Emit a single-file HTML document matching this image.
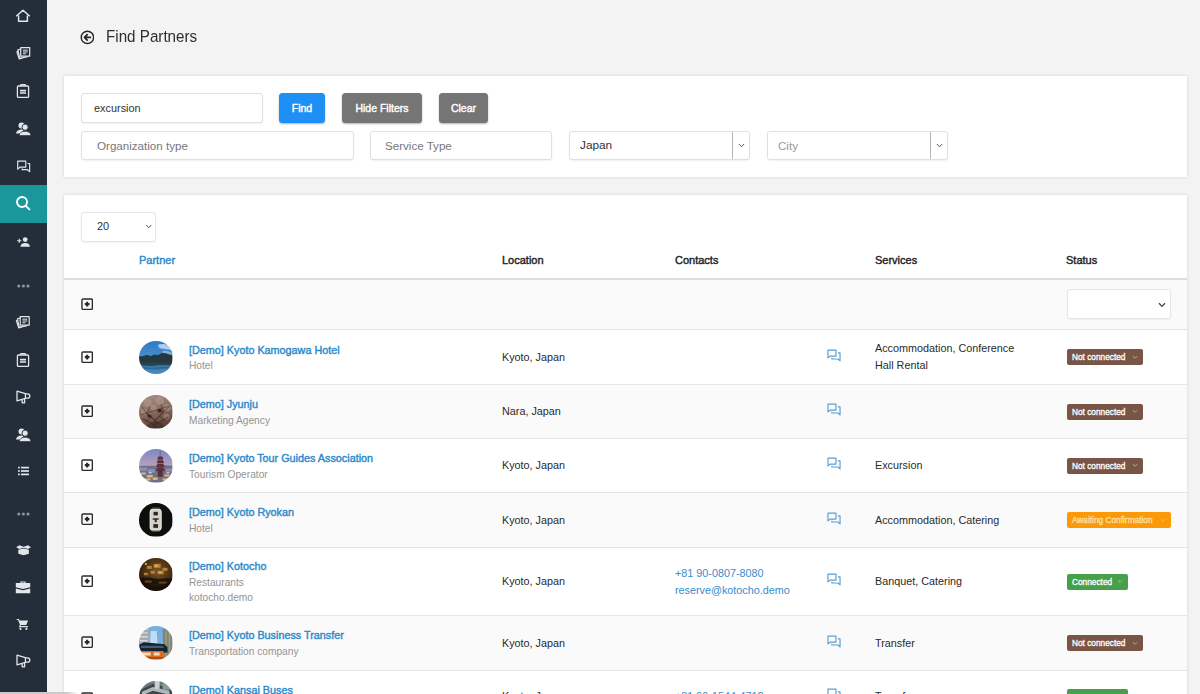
<!DOCTYPE html>
<html>
<head>
<meta charset="utf-8">
<title>Find Partners</title>
<style>
*{box-sizing:border-box;margin:0;padding:0}
html,body{width:1200px;height:694px;overflow:hidden;background:#f3f3f3;font-family:"Liberation Sans",sans-serif;color:#222}
.abs{position:absolute}
#side{position:absolute;left:0;top:0;width:46.5px;height:694px;background:#232e3a}
#side .act{position:absolute;left:0;top:184.6px;width:46.5px;height:38.3px;background:#1a979b}
#side svg{position:absolute;left:14px;width:18px;height:18px}
.card{position:absolute;left:64px;width:1123px;background:#fff;box-shadow:0 0 3px rgba(0,0,0,.14)}
.inp{position:absolute;height:29.5px;border:1px solid #e0e0e0;border-radius:3px;background:#fff;font-size:11.6px;line-height:27px;color:#333;box-shadow:0 1px 2px rgba(0,0,0,.06)}
.ph{color:#777}
.btn{position:absolute;top:17px;height:30px;border-radius:3.5px;color:#fff;font-size:10.5px;-webkit-text-stroke:.4px currentColor;text-align:center;line-height:30px;box-shadow:0 1px 2px rgba(0,0,0,.3)}
.th{position:absolute;top:58px;font-size:11px;-webkit-text-stroke:.4px currentColor;color:#222;line-height:14px}
.row{position:absolute;left:0;width:1123px;border-top:1px solid #e6e6e6}
.row.g{background:#fafafa}
.plus{position:absolute;left:16.7px;width:12.3px;height:12.3px;margin-top:.35px}
.av{position:absolute;left:75.3px;width:33.4px;height:33.4px;border-radius:50%;overflow:hidden}
.nm{position:absolute;left:125px;font-size:10.8px;-webkit-text-stroke:.4px currentColor;color:#2b8acb;line-height:14px;white-space:nowrap}
.sub{position:absolute;left:125px;font-size:10.2px;color:#949494;line-height:13px;white-space:nowrap}
.tx{position:absolute;font-size:10.8px;color:#2a2a2a;line-height:16px;white-space:nowrap}
.lnk{color:#378dcb}
.chat{position:absolute;left:763px;width:14px;height:13px}
.bdg{position:absolute;left:1002.7px;height:16px;border-radius:2px;color:#fff;font-size:8.3px;-webkit-text-stroke:.3px currentColor;line-height:16.5px;padding-left:5.3px;white-space:nowrap}
.bdg svg{position:absolute;right:5px;top:5.5px;width:6px;height:5px}
.br{background:#795548;width:76px}
.or{background:#fc9908;width:104px;color:#ffe0a0}
.gr{background:#45a049;width:61.2px}
</style>
</head>
<body>
<!--DEFS-->
<svg width="0" height="0" style="position:absolute">
<defs>
<filter id="bl" x="-10%" y="-10%" width="120%" height="120%"><feGaussianBlur stdDeviation=".55"/></filter>
<linearGradient id="g1s" x1="0" y1="0" x2="0" y2="1"><stop offset="0" stop-color="#2a78c2"/><stop offset="1" stop-color="#63a6dc"/></linearGradient>
<linearGradient id="g1w" x1="0" y1="0" x2="0" y2="1"><stop offset="0" stop-color="#2c4a55"/><stop offset=".5" stop-color="#3f86bd"/><stop offset="1" stop-color="#3a8fd0"/></linearGradient>
<linearGradient id="g3s" x1="0" y1="0" x2="0" y2="1"><stop offset="0" stop-color="#6f86c6"/><stop offset=".6" stop-color="#c9a3b8"/><stop offset="1" stop-color="#e3b6a8"/></linearGradient>
<linearGradient id="g2" x1=".3" y1="0" x2=".6" y2="1"><stop offset="0" stop-color="#a3908a"/><stop offset=".45" stop-color="#8d6f62"/><stop offset="1" stop-color="#563a31"/></linearGradient>
<radialGradient id="g5" cx=".55" cy=".4" r=".6"><stop offset="0" stop-color="#7a5524"/><stop offset="1" stop-color="#24150a"/></radialGradient>
<symbol id="a1" viewBox="0 0 34 34"><g filter="url(#bl)"><rect x="-2" y="-2" width="38" height="38" fill="url(#g1s)"/><path d="M19 4c3-1.500 8-1.500 12 1l3 5c-4-1.500-9-1.500-13-2.500z" fill="#d6e6f4" opacity=".75"/><path d="M24 10c3-.5 6 0 9 1.500v3c-3-1-6-2-9-2z" fill="#c5dcee" opacity=".5"/><rect x="-2" y="20" width="38" height="16" fill="url(#g1w)"/><path d="M-2 16.500c3-1.500 5-.5 7-1.500s4-1 6 0 4-2 6-1 4-.5 6-1.500 5 0 9 1.500 3 0 4 .5V22H-2z" fill="#26393a"/><path d="M-2 21.500h38v2.500c-6 1.500-12-.5-18 .8s-12 .5-20-.8z" fill="#24404a" opacity=".9"/><path d="M3 27c5-.8 9 .5 14 0s9-.8 14 0v1.500c-5-.5-9 .3-14 .5s-9-.8-14-.2z" fill="#2a567a" opacity=".6"/></g></symbol>
<symbol id="a2" viewBox="0 0 34 34"><g filter="url(#bl)"><rect x="-2" y="-2" width="38" height="38" fill="url(#g2)"/><g fill="#b9a198" opacity=".45"><circle cx="9" cy="8" r="4"/><circle cx="21" cy="6" r="4.500"/><circle cx="29" cy="13" r="3.500"/><circle cx="5" cy="17" r="3"/><circle cx="15" cy="13" r="3"/><circle cx="28" cy="22" r="3"/></g><g stroke="#432c26" fill="none" stroke-linecap="round" opacity=".8"><path d="M16.500 35V26L8 19M16.500 26l8-8.500M16.500 31 4 24.500M16.500 30l13-7.500" stroke-width="1.100"/><path d="M8 19 3 12M8 19l3-7M24.500 17.500l-2-8M24.500 17.500l6-5.500M11 23l-4 5M22 22l5 5M2 20l30-9" stroke-width=".7"/></g><ellipse cx="21" cy="16" rx="2.200" ry="1.900" fill="#33201c" opacity=".9"/><ellipse cx="10.800" cy="21.500" rx="2.400" ry="1.500" fill="#33201c" opacity=".85" transform="rotate(20 10.800 21.500)"/><path d="M9 30l7.500-4 8 3 3 7H6z" fill="#3a2620" opacity=".5"/></g></symbol>
<symbol id="a3" viewBox="0 0 34 34"><g filter="url(#bl)"><rect x="-2" y="-2" width="38" height="38" fill="url(#g3s)"/><path d="M-2 18c6-1.500 12-.5 18-1s12-1 20 0v19H-2z" fill="#6f7089"/><g fill="#8e97ba" opacity=".9"><rect x="0" y="19" width="8" height="3"/><rect x="9" y="20.500" width="7" height="3.500"/><rect x="27" y="20" width="8" height="3"/></g><g fill="#e0b873"><rect x="2" y="24" width="5" height="2"/><rect x="8" y="26.500" width="6" height="2.500"/><rect x="3" y="30" width="9" height="2"/><rect x="14" y="29" width="5" height="2.500"/><rect x="26" y="26" width="5" height="2"/><rect x="24" y="30" width="6" height="2"/></g><g fill="#efe3d4" opacity=".7"><rect x="10" y="23.500" width="3" height="1.500"/><rect x="28" y="23.500" width="3" height="1.500"/></g><path d="M21.500 2v6M19 10.500h5.500l-.8-2.500h-3.900zM18.200 14.200h7.100l-1.200-2.700h-4.700zM17.600 18h8.300l-1.400-2.800h-5.500zM17.200 22h9.100l-1.700-3h-5.700zM19.400 22h4.600v6h-4.600z" fill="#5b3039" stroke="#5b3039" stroke-width=".5"/></g></symbol>
<symbol id="a4" viewBox="0 0 34 34"><g filter="url(#bl)"><rect x="-2" y="-2" width="38" height="38" fill="#0a0a0a"/><rect x="10.800" y="5.500" width="12.400" height="23" rx="4" fill="#e4e0d8"/><rect x="12" y="7" width="10" height="20" rx="3.200" fill="#d6d1c7"/><g fill="#2b2824"><rect x="14.800" y="9" width="4.400" height="3.600"/><path d="M14 15.500h6v1.500h-2v2.500h-2V17h-2z"/><rect x="14.600" y="21.500" width="4.800" height="3.800"/></g><rect x="13" y="4.600" width="8" height="1.400" fill="#5a5448"/><rect x="13" y="28" width="8" height="1.400" fill="#5a5448"/></g></symbol>
<symbol id="a5" viewBox="0 0 34 34"><g filter="url(#bl)"><rect x="-2" y="-2" width="38" height="38" fill="url(#g5)"/><g fill="#c08a3a" opacity=".9"><rect x="8" y="8" width="5" height="3"/><rect x="15" y="6" width="7" height="4"/><rect x="24" y="10" width="5" height="3"/><rect x="12" y="13" width="4" height="3"/><rect x="19" y="13" width="6" height="3.500"/><rect x="5" y="15" width="4" height="2.500"/></g><g fill="#e5bb66" opacity=".8"><rect x="16" y="7" width="3" height="2"/><rect x="20" y="14" width="3" height="1.500"/><circle cx="7" cy="6" r="1.200"/></g><path d="M0 21c6-2 12-1 17 0s11-1 17 0v13H0z" fill="#1a0f07" opacity=".9"/><g fill="#6a4418"><rect x="6" y="23" width="7" height="2"/><rect x="20" y="24" width="8" height="2"/></g></g></symbol>
<symbol id="a6" viewBox="0 0 34 34"><g filter="url(#bl)"><rect x="-2" y="-2" width="38" height="38" fill="#76b0e2"/><path d="M-2 -2h13l-1 22H-2z" fill="#a3abb2"/><path d="M1 3h8M1 7h8M1 11h8M1 15h8" stroke="#d3d9de" stroke-width="1.500"/><path d="M12 5h6l1 13h-8z" fill="#c3dcf0"/><path d="M24 3h12v33H25z" fill="#7f8672"/><path d="M27.500 4v30M31 4v30" stroke="#9da48f" stroke-width="1.200"/><path d="M-2 20l7-3.500 21 2 3 3.500v5H-2z" fill="#18222e"/><path d="M2 20h22l2 2.500H2z" fill="#3f5d7a"/><path d="M-2 25.500h27l-1 10.500H-2z" fill="#e06a1c"/><path d="M1 27h11v3H1zM15 27h6v3h-6z" fill="#f4dcc2"/><path d="M-2 31.500h27v4.500H-2z" fill="#a5501a"/></g></symbol>
<symbol id="a7" viewBox="0 0 34 34"><g filter="url(#bl)"><rect x="-2" y="-2" width="38" height="38" fill="#6d787b"/><path d="M0 10 14 3l20 5v26H0z" fill="#3e474a"/><path d="M3 11 14 6l17 4v4L14 10 3 15z" fill="#aeb8ba"/><path d="M16 0h5v8h-5z" fill="#c9d1d3"/><path d="M24 2h10v7H24z" fill="#8e9a9d"/></g></symbol>
</defs>
</svg>
<!--/DEFS-->
<div id="side"><div class="act"></div><!--ICONS--><svg style="top:7px" viewBox="0 0 18 18"><g transform="translate(9 9) scale(1) translate(-9 -9)"><path d="M2.2 9.2 9 3.2l6.8 6M4.6 8.6v5.6h8.8V8.6" fill="none" stroke="#e2e6e9" stroke-width="1.5" stroke-linejoin="round"/></g></svg><svg style="top:44px" viewBox="0 0 18 18"><g transform="translate(9.5 9) scale(1) translate(-9 -9)"><g fill="none" stroke="#e2e6e9" stroke-width="1.2" stroke-linejoin="round"><path d="M6.2 3.6h9v8.6h-9z"/><path d="M6.2 5 3.4 5.8l1.8 8.6 8-1.8"/><path d="M4 7 2.4 7.8l2.4 7.2 3-1"/><path d="M8.4 6.2h4.8M8.4 8h4.8M8.4 9.8h3" stroke-width="1"/></g></g></svg><svg style="top:82px" viewBox="0 0 18 18"><g transform="translate(9 9) scale(1) translate(-9 -9)"><g fill="none" stroke="#e2e6e9" stroke-width="1.3" stroke-linejoin="round"><rect x="3.4" y="4" width="11.2" height="11.4" rx="1"/><path d="M6.8 4V2.6h4.4V4" /><path d="M6 8.6h6M6 11h6" stroke-width="1.6"/></g></g></svg><svg style="top:120px" viewBox="0 0 18 18"><g transform="translate(9.3 9) scale(1) translate(-9 -9)"><g fill="#e2e6e9"><circle cx="7.2" cy="5.6" r="3"/><path d="M1.6 13.6c.6-3 2.6-4.2 5.6-4.2 1 0 1.6.2 2 .4l-2 3.8z"/><circle cx="10.8" cy="7.2" r="3.1" stroke="#232e3a" stroke-width=".9"/><path d="M4.8 15.6c.6-3.2 3-4.4 6-4.4s5.4 1.200 6 4.400z" stroke="#232e3a" stroke-width=".7"/></g></g></svg><svg style="top:157px" viewBox="0 0 18 18"><g transform="translate(9.5 9) scale(0.88) translate(-9 -9)"><g fill="none" stroke="#e2e6e9" stroke-width="1.3" stroke-linejoin="round"><path d="M2.400 3.400h9.200v6.800H5.200L2.400 12.600z"/><path d="M13.600 6.200h2.400v9.200l-2.600-2.200H7.400v-1.400"/></g></g></svg><svg style="top:194px" viewBox="0 0 18 18"><g transform="translate(9 9) scale(1) translate(-9 -9)"><g fill="none" stroke="#fff" stroke-width="1.9" stroke-linecap="round"><circle cx="8" cy="8" r="5"/><path d="M11.800 11.800 15.400 15.400"/></g></g></svg><svg style="top:232.6px" viewBox="0 0 18 18"><g transform="translate(9.6 9) scale(0.8) translate(-9 -9)"><g fill="#e2e6e9"><circle cx="11" cy="6" r="3"/><path d="M5 15c.4-3.400 2.800-4.600 6-4.600s5.600 1.200 6 4.600z"/><path d="M1 7.400h5.200M3.600 4.800V10" stroke="#e2e6e9" stroke-width="1.400" fill="none"/></g></g></svg><svg style="top:277px" viewBox="0 0 18 18"><g transform="translate(9 9) scale(1) translate(-9 -9)"><g fill="#8d979f"><circle cx="4.8" cy="9" r="1.55"/><circle cx="9.4" cy="9" r="1.55"/><circle cx="14" cy="9" r="1.55"/></g></g></svg><svg style="top:313px" viewBox="0 0 18 18"><g transform="translate(9 9) scale(1) translate(-9 -9)"><g fill="none" stroke="#e2e6e9" stroke-width="1.2" stroke-linejoin="round"><path d="M6.2 3.6h9v8.6h-9z"/><path d="M6.2 5 3.4 5.8l1.8 8.6 8-1.8"/><path d="M4 7 2.4 7.8l2.4 7.2 3-1"/><path d="M8.4 6.2h4.8M8.4 8h4.8M8.4 9.8h3" stroke-width="1"/></g></g></svg><svg style="top:351px" viewBox="0 0 18 18"><g transform="translate(9 9) scale(1) translate(-9 -9)"><g fill="none" stroke="#e2e6e9" stroke-width="1.3" stroke-linejoin="round"><rect x="3.4" y="4" width="11.2" height="11.4" rx="1"/><path d="M6.8 4V2.6h4.4V4" /><path d="M6 8.6h6M6 11h6" stroke-width="1.6"/></g></g></svg><svg style="top:388px" viewBox="0 0 18 18"><g transform="translate(9 9) scale(1) translate(-9 -9)"><g fill="none" stroke="#e2e6e9" stroke-width="1.300" stroke-linejoin="round"><path d="M3 3.200v9.600l8.400-2.400V5.600z"/><path d="M11.400 5.800h2.200a2.200 2.200 0 0 1 0 4.400h-2.200"/><path d="M8.200 11.400v3.400h2.400v-4"/></g></g></svg><svg style="top:426px" viewBox="0 0 18 18"><g transform="translate(9.3 9) scale(1) translate(-9 -9)"><g fill="#e2e6e9"><circle cx="7.2" cy="5.6" r="3"/><path d="M1.6 13.6c.6-3 2.6-4.2 5.6-4.2 1 0 1.6.2 2 .4l-2 3.8z"/><circle cx="10.8" cy="7.2" r="3.1" stroke="#232e3a" stroke-width=".9"/><path d="M4.8 15.6c.6-3.2 3-4.4 6-4.4s5.4 1.200 6 4.400z" stroke="#232e3a" stroke-width=".7"/></g></g></svg><svg style="top:462.3px" viewBox="0 0 18 18"><g transform="translate(9.5 9) scale(0.85) translate(-9 -9)"><g fill="#e2e6e9"><rect x="2.600" y="4" width="2" height="2"/><rect x="6" y="4" width="9.400" height="2"/><rect x="2.600" y="8" width="2" height="2"/><rect x="6" y="8" width="9.400" height="2"/><rect x="2.600" y="12" width="2" height="2"/><rect x="6" y="12" width="9.400" height="2"/></g></g></svg><svg style="top:505.29999999999995px" viewBox="0 0 18 18"><g transform="translate(9 9) scale(1) translate(-9 -9)"><g fill="#8d979f"><circle cx="4.8" cy="9" r="1.55"/><circle cx="9.4" cy="9" r="1.55"/><circle cx="14" cy="9" r="1.55"/></g></g></svg><svg style="top:541px" viewBox="0 0 18 18"><g transform="translate(9.6 9) scale(0.88) translate(-9 -9)"><g fill="#e2e6e9"><path d="M.6 6 4 3.600 9 5.200l5-1.600L17.400 6 14 8 9 6.400 4 8z"/><path d="M3 8.800 9 7.200l6 1.600v4.400L9 15l-6-1.800z"/></g></g></svg><svg style="top:578px" viewBox="0 0 18 18"><g transform="translate(9 9) scale(1) translate(-9 -9)"><g fill="#e2e6e9"><path d="M6.400 5V3.400h5.200V5h-1.200V4.400H7.600V5z"/><path d="M1.800 5h14.400v4.200L9 11 1.800 9.200z"/><path d="M1.800 10.400 9 12.200l7.200-1.800v4.800H1.800z"/></g></g></svg><svg style="top:614.5px" viewBox="0 0 18 18"><g transform="translate(9 9) scale(0.85) translate(-9 -9)"><g fill="#e2e6e9"><path d="M1.600 3h2.600l.8 1.800h10l-2.200 5.400H6.600l-.6 1.200h8.800v1.400H4l1.400-3L3.200 4.400H1.600z"/><circle cx="6" cy="14.800" r="1.300"/><circle cx="13" cy="14.800" r="1.300"/></g></g></svg><svg style="top:652px" viewBox="0 0 18 18"><g transform="translate(9 9) scale(1) translate(-9 -9)"><g fill="none" stroke="#e2e6e9" stroke-width="1.300" stroke-linejoin="round"><path d="M3 3.200v9.600l8.400-2.400V5.600z"/><path d="M11.400 5.800h2.200a2.200 2.200 0 0 1 0 4.400h-2.200"/><path d="M8.200 11.400v3.400h2.400v-4"/></g></g></svg><svg style="top:689.2px" viewBox="0 0 18 18"><g transform="translate(8.5 9) scale(0.9) translate(-9 -9)"><g fill="#e2e6e9"><circle cx="9" cy="9" r="6"/></g></g></svg><!--/ICONS--></div>

<!-- title -->
<svg class="abs" style="left:79.600px;top:30px;width:14.800px;height:14.800px" viewBox="0 0 14 14"><circle cx="7" cy="7" r="5.850" fill="none" stroke="#262626" stroke-width="1.350"/><path d="M10.500 7H4.600M7.300 3.900 4.200 7l3.100 3.100" fill="none" stroke="#262626" stroke-width="1.700" stroke-linejoin="round"/></svg>
<div class="abs" style="left:105.8px;top:26px;font-size:17.4px;line-height:20px;color:#2e2e2e;white-space:nowrap;transform:scaleX(.873);transform-origin:0 50%">Find Partners</div>

<!-- filter card -->
<div class="card" style="top:76px;height:101px">
  <div class="inp" style="left:17px;top:17px;width:182px;padding-left:12px;font-size:10.9px;line-height:28px">excursion</div>
  <div class="btn" style="left:215px;width:46px;background:#1e90f5">Find</div>
  <div class="btn" style="left:278px;width:80px;background:#757575">Hide Filters</div>
  <div class="btn" style="left:375px;width:49px;background:#757575">Clear</div>
  <div class="inp ph" style="left:17px;top:55px;width:273px;height:29px;padding-left:15px">Organization type</div>
  <div class="inp ph" style="left:306px;top:55px;width:182px;height:29px;padding-left:14px">Service Type</div>
  <div class="inp" style="left:505px;top:55px;width:181px;height:29px;padding-left:10px;font-size:11.8px">Japan<span class="abs" style="left:162px;top:0;width:1px;height:27px;background:#b5b5b5"></span><svg class="abs" style="left:167.5px;top:10.5px;width:7px;height:5.2px" viewBox="0 0 8 6"><path d="M1 1.2 4 4.4 7 1.2" fill="none" stroke="#555" stroke-width="1.15"/></svg></div>
  <div class="inp ph" style="left:703px;top:55px;width:181px;height:29px;padding-left:10px;color:#999">City<span class="abs" style="left:162px;top:0;width:1px;height:27px;background:#b5b5b5"></span><svg class="abs" style="left:167.5px;top:10.5px;width:7px;height:5.2px" viewBox="0 0 8 6"><path d="M1 1.2 4 4.4 7 1.2" fill="none" stroke="#555" stroke-width="1.15"/></svg></div>
</div>

<!-- table card -->
<div class="card" id="tbl" style="top:195px;height:520px">
  <div class="inp" style="left:17px;top:16.5px;width:75px;height:30px;padding-left:15px;line-height:27.500px;font-size:11px;border-color:#e6e6e6">20<svg class="abs" style="left:62.8px;top:11.5px;width:7.5px;height:5.2px" viewBox="0 0 8 6"><path d="M1 1.2 4 4.4 7 1.2" fill="none" stroke="#555" stroke-width="1.15"/></svg></div>
  <div class="th" style="left:75px;color:#2b8acb">Partner</div>
  <div class="th" style="left:438px">Location</div>
  <div class="th" style="left:611px">Contacts</div>
  <div class="th" style="left:811px">Services</div>
  <div class="th" style="left:1002px">Status</div>
  <div class="abs" style="left:0;top:83px;width:1123px;height:2px;background:#dcdcdc"></div>
  <!--ROWS-->
<div class="row g" style="top:85px;height:50px;border-top:none"><svg class="plus" style="top:17.5px" viewBox="0 0 13 13"><rect x="1" y="1" width="11" height="11" rx="1.2" fill="none" stroke="#2a2a2a" stroke-width="1.45"/><path d="M6.5 4v5M4 6.5h5" stroke="#2a2a2a" stroke-width="2.2" fill="none"/></svg><div class="inp" style="left:1002.5px;top:9px;width:104px;height:30px;border-color:#e6e6e6"><svg class="abs" style="left:90px;top:12px;width:8px;height:6px" viewBox="0 0 8 6"><path d="M1 1.2 4 4.4 7 1.2" fill="none" stroke="#444" stroke-width="1.3"/></svg></div></div>
<div class="row" style="top:134.3px;height:54.7px"><svg class="plus" style="top:19.9px" viewBox="0 0 13 13"><rect x="1" y="1" width="11" height="11" rx="1.2" fill="none" stroke="#2a2a2a" stroke-width="1.45"/><path d="M6.5 4v5M4 6.5h5" stroke="#2a2a2a" stroke-width="2.2" fill="none"/></svg><div class="av" style="top:10.7px"><svg viewBox="0 0 34 34" width="33.4" height="33.4" style="display:block"><use href="#a1"/></svg></div><div class="nm" style="top:12.6px">[Demo] Kyoto Kamogawa Hotel</div><div class="sub" style="top:29.2px">Hotel</div><div class="tx" style="left:438px;top:18.35px">Kyoto, Japan</div><svg class="chat" style="top:18.6px" viewBox="0 0 15 14"><path d="M1 1.2h8.6v6.4H3.6L1 9.6z" fill="none" stroke="#5b9fd2" stroke-width="1.25" stroke-linejoin="round"/><path d="M11.6 4.2H14v8.6l-2.4-2H5.2V9.4" fill="none" stroke="#5b9fd2" stroke-width="1.25" stroke-linejoin="round"/></svg><div class="tx" style="left:811px;top:9.950000000000001px">Accommodation, Conference</div><div class="tx" style="left:811px;top:26.75px">Hall Rental</div><div class="bdg br" style="top:19.1px">Not connected<svg viewBox="0 0 7 6"><path d="M1 1.5 3.5 4 6 1.5" fill="none" stroke="#cdbab2" stroke-width="1"/></svg></div></div>
<div class="row g" style="top:189px;height:54px"><svg class="plus" style="top:19.5px" viewBox="0 0 13 13"><rect x="1" y="1" width="11" height="11" rx="1.2" fill="none" stroke="#2a2a2a" stroke-width="1.45"/><path d="M6.5 4v5M4 6.5h5" stroke="#2a2a2a" stroke-width="2.2" fill="none"/></svg><div class="av" style="top:10.3px"><svg viewBox="0 0 34 34" width="33.4" height="33.4" style="display:block"><use href="#a2"/></svg></div><div class="nm" style="top:11.9px">[Demo] Jyunju</div><div class="sub" style="top:29.0px">Marketing Agency</div><div class="tx" style="left:438px;top:18.0px">Nara, Japan</div><svg class="chat" style="top:18.2px" viewBox="0 0 15 14"><path d="M1 1.2h8.6v6.4H3.6L1 9.6z" fill="none" stroke="#5b9fd2" stroke-width="1.25" stroke-linejoin="round"/><path d="M11.6 4.2H14v8.6l-2.4-2H5.2V9.4" fill="none" stroke="#5b9fd2" stroke-width="1.25" stroke-linejoin="round"/></svg><div class="bdg br" style="top:18.7px">Not connected<svg viewBox="0 0 7 6"><path d="M1 1.5 3.5 4 6 1.5" fill="none" stroke="#cdbab2" stroke-width="1"/></svg></div></div>
<div class="row" style="top:243px;height:54px"><svg class="plus" style="top:19.5px" viewBox="0 0 13 13"><rect x="1" y="1" width="11" height="11" rx="1.2" fill="none" stroke="#2a2a2a" stroke-width="1.45"/><path d="M6.5 4v5M4 6.5h5" stroke="#2a2a2a" stroke-width="2.2" fill="none"/></svg><div class="av" style="top:10.3px"><svg viewBox="0 0 34 34" width="33.4" height="33.4" style="display:block"><use href="#a3"/></svg></div><div class="nm" style="top:11.9px">[Demo] Kyoto Tour Guides Association</div><div class="sub" style="top:29.0px">Tourism Operator</div><div class="tx" style="left:438px;top:18.0px">Kyoto, Japan</div><svg class="chat" style="top:18.2px" viewBox="0 0 15 14"><path d="M1 1.2h8.6v6.4H3.6L1 9.6z" fill="none" stroke="#5b9fd2" stroke-width="1.25" stroke-linejoin="round"/><path d="M11.6 4.2H14v8.6l-2.4-2H5.2V9.4" fill="none" stroke="#5b9fd2" stroke-width="1.25" stroke-linejoin="round"/></svg><div class="tx" style="left:811px;top:18.0px">Excursion</div><div class="bdg br" style="top:18.7px">Not connected<svg viewBox="0 0 7 6"><path d="M1 1.5 3.5 4 6 1.5" fill="none" stroke="#cdbab2" stroke-width="1"/></svg></div></div>
<div class="row g" style="top:297px;height:55px"><svg class="plus" style="top:20.0px" viewBox="0 0 13 13"><rect x="1" y="1" width="11" height="11" rx="1.2" fill="none" stroke="#2a2a2a" stroke-width="1.45"/><path d="M6.5 4v5M4 6.5h5" stroke="#2a2a2a" stroke-width="2.2" fill="none"/></svg><div class="av" style="top:10.3px"><svg viewBox="0 0 34 34" width="33.4" height="33.4" style="display:block"><use href="#a4"/></svg></div><div class="nm" style="top:11.9px">[Demo] Kyoto Ryokan</div><div class="sub" style="top:29.0px">Hotel</div><div class="tx" style="left:438px;top:18.5px">Kyoto, Japan</div><svg class="chat" style="top:18.7px" viewBox="0 0 15 14"><path d="M1 1.2h8.6v6.4H3.6L1 9.6z" fill="none" stroke="#5b9fd2" stroke-width="1.25" stroke-linejoin="round"/><path d="M11.6 4.2H14v8.6l-2.4-2H5.2V9.4" fill="none" stroke="#5b9fd2" stroke-width="1.25" stroke-linejoin="round"/></svg><div class="tx" style="left:811px;top:18.5px">Accommodation, Catering</div><div class="bdg or" style="top:19.2px">Awaiting Confirmation<svg viewBox="0 0 7 6"><path d="M1 1.5 3.5 4 6 1.5" fill="none" stroke="#ffc36a" stroke-width="1"/></svg></div></div>
<div class="row" style="top:352px;height:68px"><svg class="plus" style="top:26.5px" viewBox="0 0 13 13"><rect x="1" y="1" width="11" height="11" rx="1.2" fill="none" stroke="#2a2a2a" stroke-width="1.45"/><path d="M6.5 4v5M4 6.5h5" stroke="#2a2a2a" stroke-width="2.2" fill="none"/></svg><div class="av" style="top:9.5px"><svg viewBox="0 0 34 34" width="33.4" height="33.4" style="display:block"><use href="#a5"/></svg></div><div class="nm" style="top:11px">[Demo] Kotocho</div><div class="sub" style="top:27.5px">Restaurants</div><div class="sub" style="top:43.0px">kotocho.demo</div><div class="tx" style="left:438px;top:25.0px">Kyoto, Japan</div><div class="tx lnk" style="left:611px;top:16.5px">+81 90-0807-8080</div><div class="tx lnk" style="left:611px;top:33.5px">reserve@kotocho.demo</div><svg class="chat" style="top:25.2px" viewBox="0 0 15 14"><path d="M1 1.2h8.6v6.4H3.6L1 9.6z" fill="none" stroke="#5b9fd2" stroke-width="1.25" stroke-linejoin="round"/><path d="M11.6 4.2H14v8.6l-2.4-2H5.2V9.4" fill="none" stroke="#5b9fd2" stroke-width="1.25" stroke-linejoin="round"/></svg><div class="tx" style="left:811px;top:25.0px">Banquet, Catering</div><div class="bdg gr" style="top:25.7px">Connected<svg viewBox="0 0 7 6"><path d="M1 1.5 3.5 4 6 1.5" fill="none" stroke="#a5d6a7" stroke-width="1"/></svg></div></div>
<div class="row g" style="top:420px;height:55px"><svg class="plus" style="top:20.0px" viewBox="0 0 13 13"><rect x="1" y="1" width="11" height="11" rx="1.2" fill="none" stroke="#2a2a2a" stroke-width="1.45"/><path d="M6.5 4v5M4 6.5h5" stroke="#2a2a2a" stroke-width="2.2" fill="none"/></svg><div class="av" style="top:10.3px"><svg viewBox="0 0 34 34" width="33.4" height="33.4" style="display:block"><use href="#a6"/></svg></div><div class="nm" style="top:11.9px">[Demo] Kyoto Business Transfer</div><div class="sub" style="top:29.0px">Transportation company</div><div class="tx" style="left:438px;top:18.5px">Kyoto, Japan</div><svg class="chat" style="top:18.7px" viewBox="0 0 15 14"><path d="M1 1.2h8.6v6.4H3.6L1 9.6z" fill="none" stroke="#5b9fd2" stroke-width="1.25" stroke-linejoin="round"/><path d="M11.6 4.2H14v8.6l-2.4-2H5.2V9.4" fill="none" stroke="#5b9fd2" stroke-width="1.25" stroke-linejoin="round"/></svg><div class="tx" style="left:811px;top:18.5px">Transfer</div><div class="bdg br" style="top:19.2px">Not connected<svg viewBox="0 0 7 6"><path d="M1 1.5 3.5 4 6 1.5" fill="none" stroke="#cdbab2" stroke-width="1"/></svg></div></div>
<div class="row" style="top:475px;height:55px"><svg class="plus" style="top:20.8px" viewBox="0 0 13 13"><rect x="1" y="1" width="11" height="11" rx="1.2" fill="none" stroke="#2a2a2a" stroke-width="1.45"/><path d="M6.5 4v5M4 6.5h5" stroke="#2a2a2a" stroke-width="2.2" fill="none"/></svg><div class="av" style="top:10.3px"><svg viewBox="0 0 34 34" width="33.4" height="33.4" style="display:block"><use href="#a7"/></svg></div><div class="nm" style="top:11.9px">[Demo] Kansai Buses</div><div class="sub" style="top:29.0px">Transportation company</div><div class="tx" style="left:438px;top:17.1px">Kyoto, Japan</div><div class="tx lnk" style="left:611px;top:17.1px">+81 90-1544-4712</div><svg class="chat" style="top:17.3px" viewBox="0 0 15 14"><path d="M1 1.2h8.6v6.4H3.6L1 9.6z" fill="none" stroke="#5b9fd2" stroke-width="1.25" stroke-linejoin="round"/><path d="M11.6 4.2H14v8.6l-2.4-2H5.2V9.4" fill="none" stroke="#5b9fd2" stroke-width="1.25" stroke-linejoin="round"/></svg><div class="tx" style="left:811px;top:17.1px">Transfer</div><div class="bdg gr" style="top:17.8px;line-height:20px">Connected<svg viewBox="0 0 7 6"><path d="M1 1.5 3.5 4 6 1.5" fill="none" stroke="#a5d6a7" stroke-width="1"/></svg></div></div>
<!--/ROWS-->
</div>
<div id="strip" class="abs" style="left:0;top:692px;width:78px;height:2px;background:linear-gradient(90deg,#c9c9c9 0,#c9c9c9 85%,rgba(201,201,201,0) 100%)"></div>
</body>
</html>
